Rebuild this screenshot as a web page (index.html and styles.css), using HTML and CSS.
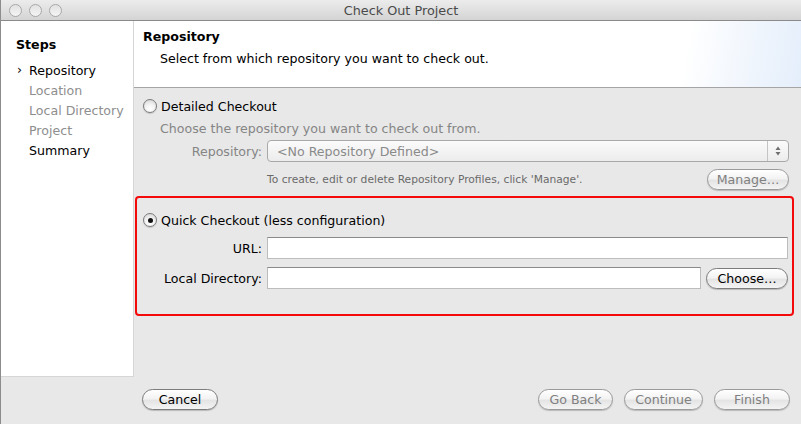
FILE: index.html
```html
<!DOCTYPE html>
<html>
<head>
<meta charset="utf-8">
<link rel="stylesheet" href="styles.css">
</head>
<body>
<div class="window">
  <div class="titlebar">
    <div class="lights"><span class="light"></span><span class="light"></span><span class="light"></span></div>
    <div class="title">Check Out Project</div>
  </div>
  <div class="main">
    <aside class="sidebar">
      <div class="steps-title">Steps</div>
      <ul class="steps">
        <li class="step current"><span class="arrow">›</span>Repository</li>
        <li class="step disabled">Location</li>
        <li class="step disabled">Local Directory</li>
        <li class="step disabled">Project</li>
        <li class="step">Summary</li>
      </ul>
    </aside>
    <section class="content">
      <header class="header">
        <div class="header-title">Repository</div>
        <div class="header-desc">Select from which repository you want to check out.</div>
      </header>
      <div class="body">
        <label class="radio-row">
          <span class="radio"></span>
          <span class="radio-label">Detailed Checkout</span>
        </label>
        <div class="hint">Choose the repository you want to check out from.</div>
        <div class="form-row first">
          <span class="label dim">Repository:</span>
          <div class="select">
            <span class="select-text">&lt;No Repository Defined&gt;</span>
            <span class="stepper">
              <svg width="8" height="12" viewBox="0 0 8 12"><path d="M4 1.5 L6.5 5 L1.5 5 Z" fill="#6f6f6f"/><path d="M4 10.5 L6.5 7 L1.5 7 Z" fill="#6f6f6f"/></svg>
            </span>
          </div>
        </div>
        <div class="form-row note-row">
          <span class="label"></span>
          <div class="note-line">
            <span class="note">To create, edit or delete Repository Profiles, click 'Manage'.</span>
            <button class="btn disabled manage">Manage…</button>
          </div>
        </div>
        <div class="quick">
          <label class="radio-row">
            <span class="radio checked"></span>
            <span class="radio-label">Quick Checkout (less configuration)</span>
          </label>
          <div class="form-row url-row">
            <span class="label">URL:</span>
            <div class="input"></div>
          </div>
          <div class="form-row dir-row">
            <span class="label">Local Directory:</span>
            <div class="input-with-btn">
              <div class="input"></div>
              <button class="btn choose">Choose…</button>
            </div>
          </div>
        </div>
      </div>
    </section>
  </div>
  <footer class="footer">
    <button class="btn cancel">Cancel</button>
    <div class="nav-buttons">
      <button class="btn disabled goback">Go Back</button>
      <button class="btn disabled cont">Continue</button>
      <button class="btn disabled finish">Finish</button>
    </div>
  </footer>
</div>
</body>
</html>
```
FILE: styles.css
```css
* { box-sizing: border-box; }
html, body { margin: 0; padding: 0; }
body {
  width: 801px;
  height: 424px;
  overflow: hidden;
  background: #e8e8e8;
  font-family: "DejaVu Sans", "Liberation Sans", sans-serif;
  font-size: 12.6px;
  color: #000;
}
.window {
  width: 801px;
  height: 424px;
  border-left: 1px solid #8d8d8d;
  display: flex;
  flex-direction: column;
}
.titlebar {
  height: 21px;
  flex: none;
  background: linear-gradient(#ececec, #d4d4d4);
  border-bottom: 1px solid #8a8a8a;
  display: flex;
  align-items: center;
  position: relative;
}
.lights {
  display: flex;
  gap: 7px;
  padding-left: 8px;
}
.light {
  width: 13px;
  height: 13px;
  border-radius: 50%;
  border: 1px solid #a8a8a8;
  background: linear-gradient(#e2e2e2, #f4f4f4);
}
.title {
  position: absolute;
  left: 0;
  right: 0;
  top: 3px;
  text-align: center;
  color: #4a4a4a;
  font-size: 12.8px;
}
.main {
  display: flex;
  height: 356px;
  flex: none;
}
.sidebar {
  width: 133px;
  flex: none;
  background: #fff;
  border-right: 1px solid #d6d6d6;
  border-bottom: 1px solid #d6d6d6;
  padding: 16px 0 0 15px;
}
.steps-title {
  font-weight: bold;
  line-height: 16px;
  margin-bottom: 8px;
}
.steps {
  list-style: none;
  margin: 0;
  padding: 0;
}
.step {
  line-height: 20px;
  padding-left: 13px;
  position: relative;
}
.step .arrow {
  position: absolute;
  left: 1px;
  top: -1px;
  color: #000;
}
.step.disabled { color: #8e8e8e; }
.content {
  flex: 1;
  display: flex;
  flex-direction: column;
}
.header {
  height: 67px;
  flex: none;
  background: linear-gradient(100deg, #fff 0%, #fff 82%, #e4eefb 100%);
  border-bottom: 1px solid #a5a5a5;
  padding: 8px 0 0 9px;
}
.header-title {
  font-weight: bold;
  line-height: 16px;
}
.header-desc {
  padding-left: 17px;
  margin-top: 6px;
  line-height: 16px;
}
.body {
  padding: 10px 0 0 0;
}
.radio-row {
  display: flex;
  align-items: center;
  gap: 4px;
  height: 16px;
  padding-left: 9px;
}
.radio {
  width: 14px;
  height: 14px;
  border-radius: 50%;
  border: 1px solid #7a7a7a;
  background: radial-gradient(circle at 50% 75%, #ffffff 0%, #f2f2f2 45%, #cfcfcf 100%);
  box-shadow: 0 1px 1px rgba(0,0,0,0.15);
  display: flex;
  align-items: center;
  justify-content: center;
}
.radio.checked::after {
  content: "";
  width: 5px;
  height: 5px;
  border-radius: 50%;
  background: #111;
}
.hint {
  color: #858585;
  padding-left: 26px;
  margin-top: 7px;
  line-height: 16px;
}
.form-row {
  display: grid;
  grid-template-columns: 128px 1fr;
  column-gap: 5px;
  align-items: center;
  padding-right: 12px;
}
.label {
  text-align: right;
}
.label.dim { color: #858585; }
.form-row.first { margin-top: 3px; }
.select {
  height: 22px;
  border: 1px solid #a9a9a9;
  border-radius: 4px;
  background: linear-gradient(#fbfbfb, #ececec);
  display: flex;
  align-items: center;
  color: #8a8a8a;
}
.select-text {
  flex: 1;
  padding-left: 9px;
}
.stepper {
  width: 21px;
  height: 100%;
  border-left: 1px solid #c4c4c4;
  display: flex;
  align-items: center;
  justify-content: center;
}
.note-row { margin-top: 7px; }
.note-line {
  display: flex;
  align-items: center;
  justify-content: space-between;
}
.note {
  font-size: 10.7px;
  color: #6a6a6a;
}
.btn {
  font-family: inherit;
  font-size: 12.6px;
  height: 21px;
  padding: 0;
  border: 1px solid #7c7c7c;
  border-radius: 11px;
  background: linear-gradient(#ffffff 0%, #f3f3f3 45%, #e4e4e4 55%, #f4f4f4 100%);
  box-shadow: 0 1px 1px rgba(0,0,0,0.2);
  color: #000;
  line-height: 19px;
}
.btn.disabled {
  color: #808080;
  border-color: #9a9a9a;
}
.manage { width: 82px; }
.quick {
  margin: 6px 7px 0 1px;
  height: 120px;
  border: 2px solid #f40a0a;
  border-radius: 4px;
  padding-top: 14px;
}
.quick .radio-row { padding-left: 6px; }
.quick .form-row { padding-right: 4px; grid-template-columns: 125px 1fr; }
.url-row { margin-top: 9px; }
.dir-row { margin-top: 8px; }
.input {
  height: 22px;
  background: #fff;
  border: 1px solid #bdbdbd;
  border-top-color: #8a8a8a;
  flex: 1;
}
.input-with-btn {
  display: flex;
  align-items: center;
  gap: 5px;
}
.choose { width: 82px; }
.footer {
  flex: 1;
  display: flex;
  align-items: flex-start;
  justify-content: space-between;
  padding: 12px 11px 0 141px;
}
.nav-buttons {
  display: flex;
  gap: 11px;
}
.cancel { width: 76px; }
.goback { width: 75px; }
.cont { width: 79px; }
.finish { width: 76px; }
```
